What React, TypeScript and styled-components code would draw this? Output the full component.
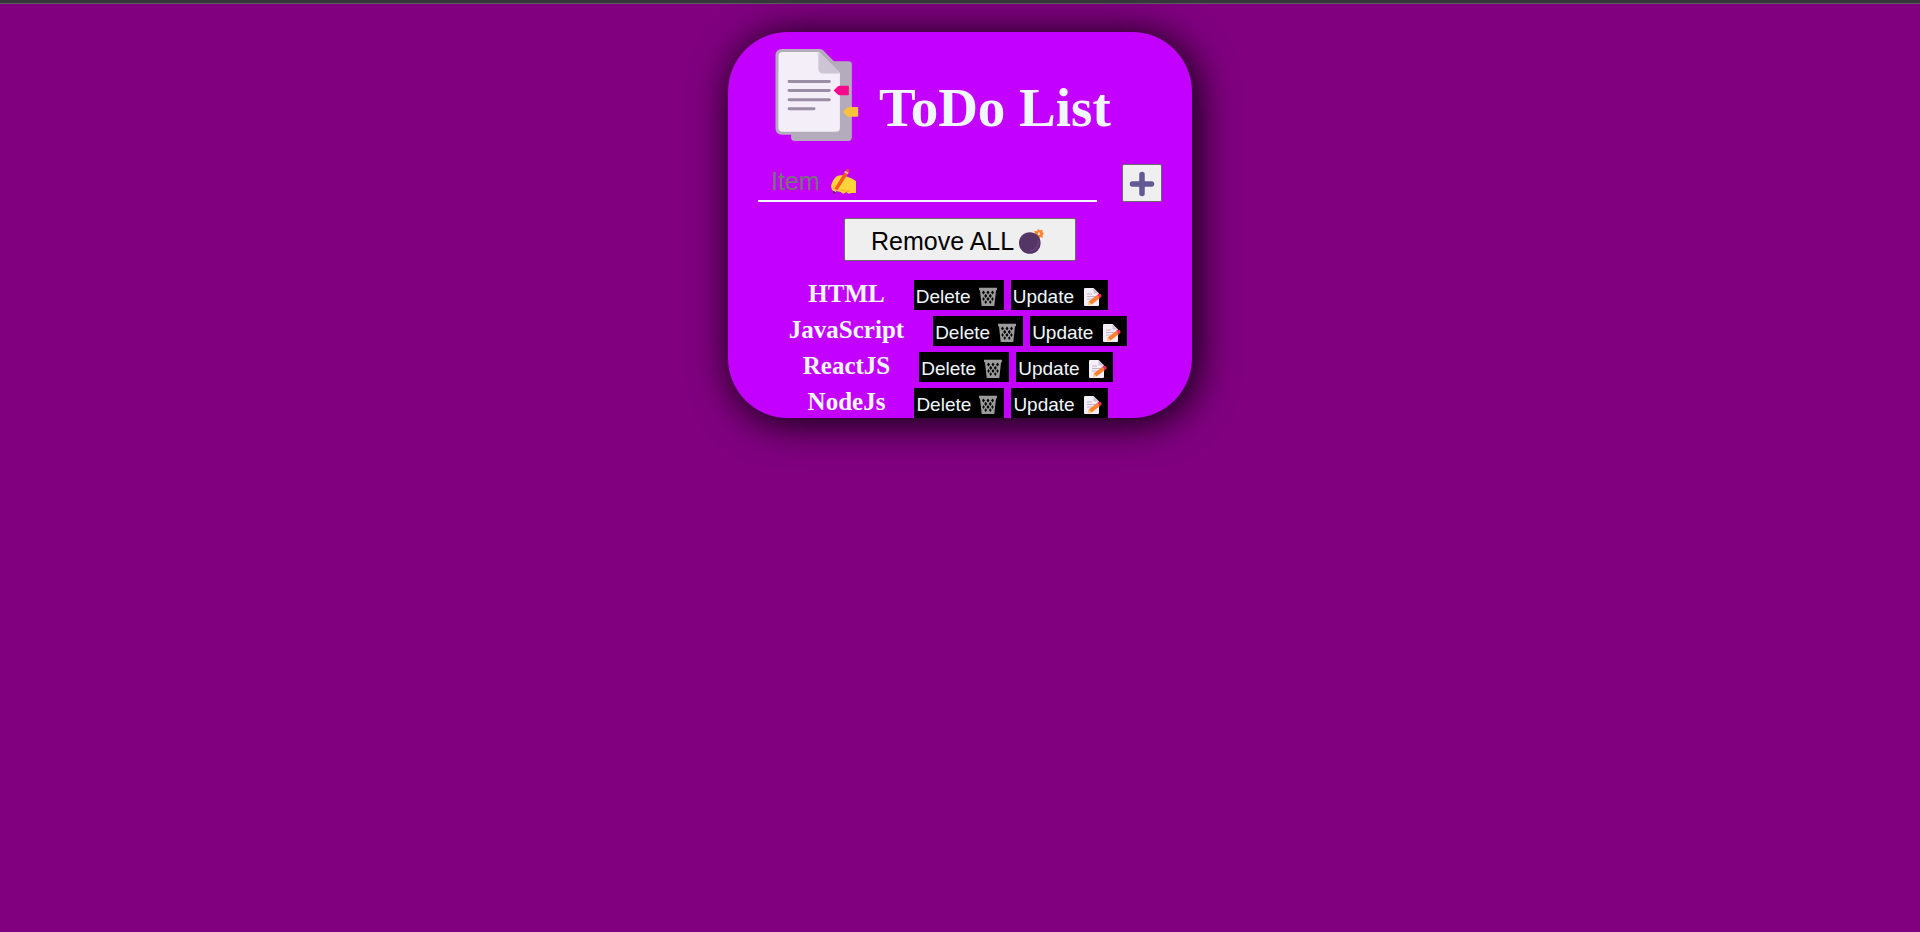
import React, { useState } from "react";
import styled, { createGlobalStyle } from "styled-components";

const GlobalStyle = createGlobalStyle`
  * { box-sizing: border-box; }
  body {
    margin: 0;
    min-height: 100vh;
    background: #800080;
    border-top: 3px solid #35363a;
    font-family: "Liberation Serif", "Times New Roman", serif;
  }
`;

const Page = styled.main`
  display: flex;
  justify-content: center;
  padding: 28px 16px 60px;
  border-top: 1px solid #5e5e5e;
`;

const Card = styled.section`
  width: 100%;
  max-width: 464px;
  padding: 17px 30px 0;
  border-radius: 60px;
  background: #c300ff;
  color: aliceblue;
  box-shadow: 4px 4px 40px #000;
`;

const Header = styled.header`
  display: flex;
  align-items: flex-end;
  gap: 20px;
  padding-left: 17px;
`;

const Title = styled.h1`
  margin: 0 0 5px;
  font-size: 55px;
  line-height: 56px;
  font-weight: bold;
`;

const Form = styled.form`
  display: flex;
  gap: 25px;
  margin: 23px 0 16px;
`;

const Field = styled.label`
  position: relative;
  flex: 1;
  min-width: 0;
  display: flex;
  height: 38px;
  border-bottom: 2px solid aliceblue;
`;

const ItemInput = styled.input`
  width: 100%;
  padding: 0 13px 1px;
  border: 0;
  outline: 0;
  background: transparent;
  color: aliceblue;
  font: 25px "Liberation Sans", Arial, sans-serif;
  &::placeholder { color: #757575; }
  &:not(:placeholder-shown) + svg { display: none; }
`;

const HandIcon = styled.svg`
  position: absolute;
  left: 73px;
  top: 5px;
  pointer-events: none;
`;

const PlainButton = styled.button`
  display: flex;
  align-items: center;
  border: 1px solid #6b6b6b;
  border-radius: 2px;
  background: #efefef;
  color: #000;
  font: 25px "Liberation Sans", Arial, sans-serif;
`;

const AddButton = styled(PlainButton)`
  justify-content: center;
  width: 40px;
  height: 38px;
  padding: 2px 0 0;
`;

const RemoveAllButton = styled(PlainButton)`
  gap: 5px;
  width: 232px;
  height: 43px;
  margin: 0 auto;
  padding: 3px 0 0 26px;
`;

const List = styled.ul`
  display: flex;
  flex-direction: column;
  gap: 6px;
  margin: 19px 0 0;
  padding: 0 4px 0 0;
  list-style: none;
`;

const Row = styled.li`
  display: flex;
  justify-content: center;
  height: 30px;
`;

const ItemName = styled.span`
  margin-right: 29px;
  font-size: 25px;
  line-height: 28px;
  font-weight: bold;
`;

const RowButton = styled.button<{ $wide?: boolean }>`
  display: flex;
  align-items: center;
  justify-content: space-between;
  width: ${(p) => (p.$wide ? 97 : 90)}px;
  padding: 3px 6px 0 2px;
  border: 0;
  background: #000;
  color: aliceblue;
  font: 19px "Liberation Sans", Arial, sans-serif;
  & + & { margin-left: 7px; }
`;

const NotesIcon = () => (
  <svg width="84" height="92" viewBox="45 27 252 277" aria-hidden="true">
    <path d="M104 64H266Q276 64 276 74V293Q276 304 265 304H104Q93 304 93 293V75Z" fill="#b4acbc" />
    <path d="M66 27H180Q186 27 191 32L236 78Q240 82 240 90V267Q240 285 222 285H66Q46 285 46 265V47Q46 27 66 27Z" fill="#b4acbc" />
    <path d="M67 36H177L240 99V264Q240 276 228 276H67Q55 276 55 264V48Q55 36 67 36Z" fill="#f3eef8" />
    <path d="M175 36Q179 37 184 42L234 91Q239 96 240 101H190Q175 101 175 86Z" fill="#cdc4d6" />
    <path d="M87 124.500H208M87 152H208M87 180H208M87 207H162" stroke="#998ea4" strokeWidth="9" strokeLinecap="round" />
    <path d="M221 152L234 139Q236 138 239 138H264Q267 138 267 141V163Q267 166 264 166H239Q236 166 234 165Z" fill="#f70a8d" />
    <path d="M249 216L262 203Q264 202 267 202H292Q295 202 295 205V228Q295 231 292 231H267Q264 231 262 230Z" fill="#f9c23c" />
  </svg>
);

const WritingHand = () => (
  <HandIcon width="25" height="25" viewBox="243 42 75 75" aria-hidden="true">
    <path d="M249 108Q242 100 244 89Q247 75 258 65Q266 59 277 61L292 65Q306 69 318 78V114H303L297 116L289 112L280 116L270 110L258 108Z" fill="#ffd43a" />
    <path d="M272 104Q286 111 300 108" stroke="#f9a825" strokeWidth="3" fill="none" />
    <path d="M285 50L294 56L262 106L253 101Z" fill="#fb5a22" />
    <path d="M285 50L289 43Q292 40 296 43Q299 46 297 50L294 56Z" fill="#ee3f3f" />
    <path d="M286 48L296 53L293 58L283 52Z" fill="#e5c9c8" />
    <path d="M253 101L262 106L253 115H249Z" fill="#f5b88a" />
    <path d="M250 107L257 112L250 117Z" fill="#1c1c1c" />
    <path d="M246 98Q252 91 256 87L258 91Q252 97 250 104Z" fill="#ffc12e" />
  </HandIcon>
);

const PlusIcon = () => (
  <svg width="26" height="26" viewBox="0 0 26 26" aria-hidden="true">
    <path d="M13 3.500V22.500M3.500 13H22.500" stroke="#635994" strokeWidth="5.500" strokeLinecap="round" />
  </svg>
);

const BombIcon = () => (
  <svg width="25" height="25" viewBox="0 0 25 25" aria-hidden="true">
    <path d="M15.500 7.500L16 4L15 2L18 2.200L19 0L21 1.600L23.500 .5L23.500 3L25 4.500L23.500 6L24 8.500L21.500 8.300L19.500 10Z" fill="#ff822d" />
    <circle cx="20" cy="4.800" r="1.200" fill="#efefef" />
    <circle cx="10.800" cy="14" r="10.800" fill="#533566" />
    <path d="M19.300 12Q19.500 20.500 11 22" fill="none" stroke="#6d4380" strokeWidth="1.500" strokeLinecap="round" />
  </svg>
);

const TrashIcon = () => (
  <svg width="20" height="20" viewBox="0 0 20 20" aria-hidden="true">
    <path d="M1 .8H19V3L18 3.500L16.300 19H3.700L2 3.500L1 3Z" fill="#9b9b9b" />
    <path
      d="M5.500 3.600L7 5.600L5.500 7.600L4 5.600ZM10 3.600L11.500 5.600L10 7.600L8.500 5.600ZM14.500 3.600L16 5.600L14.500 7.600L13 5.600ZM7.700 6.800L9.200 8.900L7.700 11L6.200 8.900ZM12.300 6.800L13.800 8.900L12.300 11L10.800 8.900ZM5.500 10L6.800 12L5.500 14L4.300 12ZM10 10L11.500 12L10 14L8.500 12ZM14.500 10L15.700 12L14.500 14L13.200 12ZM7.700 13.200L9 15.100L7.700 17L6.400 15.100ZM12.300 13.200L13.600 15.100L12.300 17L11 15.100Z"
      fill="#000"
    />
  </svg>
);

const MemoIcon = () => (
  <svg width="18" height="20" viewBox="1 0 18 20" aria-hidden="true">
    <path d="M2 1H10.500L16 6.500V18Q16 19 15 19H2Q1 19 1 18V2Q1 1 2 1Z" fill="#f3eef8" />
    <path d="M10.500 1L16 6.500H11.500Q10.500 6.500 10.500 5.500Z" fill="#cdc4d6" />
    <path d="M4 7H9M4 9.500H13M4 12H10" stroke="#c0b5cb" strokeWidth="1.200" />
    <path d="M14 8L17 11L8.500 17.500L5.500 14.700Z" fill="#ff822d" />
    <path d="M5.500 14.700L8.500 17.500L4.800 18.200Z" fill="#ffce7c" />
    <path d="M14 8L15.300 6.900Q16.800 6.200 18 7.500Q19 8.800 18.200 10L17 11Z" fill="#f92f60" />
  </svg>
);

export default function App() {
  const [items, setItems] = useState(["HTML", "JavaScript", "ReactJS", "NodeJs"]);
  const [draft, setDraft] = useState("");

  const addItem = (event: React.FormEvent) => {
    event.preventDefault();
    if (draft.trim()) setItems([...items, draft.trim()]);
    setDraft("");
  };
  const removeItem = (index: number) => setItems(items.filter((_, i) => i !== index));
  const editItem = (index: number) => {
    setDraft(items[index]);
    removeItem(index);
  };

  return (
    <>
      <GlobalStyle />
      <Page>
        <Card>
          <Header>
            <NotesIcon />
            <Title>ToDo List</Title>
          </Header>
          <Form onSubmit={addItem}>
            <Field>
              <ItemInput
                aria-label="Item"
                placeholder="Item"
                value={draft}
                onChange={(event) => setDraft(event.target.value)}
              />
              <WritingHand />
            </Field>
            <AddButton type="submit" aria-label="Add item">
              <PlusIcon />
            </AddButton>
          </Form>
          <RemoveAllButton type="button" onClick={() => setItems([])}>
            Remove ALL
            <BombIcon />
          </RemoveAllButton>
          <List>
            {items.map((item, index) => (
              <Row key={index}>
                <ItemName>{item}</ItemName>
                <RowButton type="button" onClick={() => removeItem(index)}>
                  Delete
                  <TrashIcon />
                </RowButton>
                <RowButton type="button" $wide onClick={() => editItem(index)}>
                  Update
                  <MemoIcon />
                </RowButton>
              </Row>
            ))}
          </List>
        </Card>
      </Page>
    </>
  );
}
